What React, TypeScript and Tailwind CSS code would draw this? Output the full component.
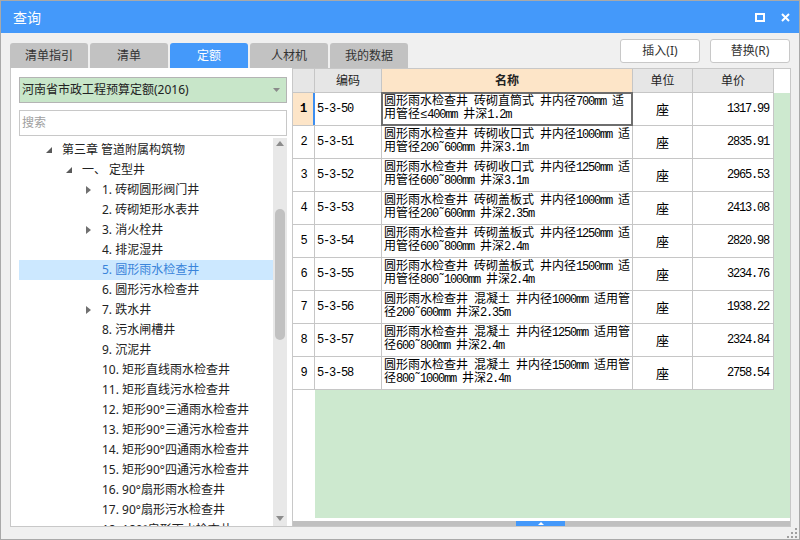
import React from 'react';

type TreeItem = { level: 0 | 1 | 2; text: string; arrow?: 'open' | 'closed'; selected?: boolean };

const treeItems: TreeItem[] = [
  { level: 0, text: '第三章 管道附属构筑物', arrow: 'open' },
  { level: 1, text: '一、 定型井', arrow: 'open' },
  { level: 2, text: '1. 砖砌圆形阀门井', arrow: 'closed' },
  { level: 2, text: '2. 砖砌矩形水表井' },
  { level: 2, text: '3. 消火栓井', arrow: 'closed' },
  { level: 2, text: '4. 排泥湿井' },
  { level: 2, text: '5. 圆形雨水检查井', selected: true },
  { level: 2, text: '6. 圆形污水检查井' },
  { level: 2, text: '7. 跌水井', arrow: 'closed' },
  { level: 2, text: '8. 污水闸槽井' },
  { level: 2, text: '9. 沉泥井' },
  { level: 2, text: '10. 矩形直线雨水检查井' },
  { level: 2, text: '11. 矩形直线污水检查井' },
  { level: 2, text: '12. 矩形90°三通雨水检查井' },
  { level: 2, text: '13. 矩形90°三通污水检查井' },
  { level: 2, text: '14. 矩形90°四通雨水检查井' },
  { level: 2, text: '15. 矩形90°四通污水检查井' },
  { level: 2, text: '16. 90°扇形雨水检查井' },
  { level: 2, text: '17. 90°扇形污水检查井' },
  { level: 2, text: '18. 180°扇形雨水检查井' },
];

const rows = [
  { code: '5-3-50', l1: '圆形雨水检查井 砖砌直筒式 井内径700mm 适', l2: '用管径≤400mm 井深1.2m', price: '1317.99' },
  { code: '5-3-51', l1: '圆形雨水检查井 砖砌收口式 井内径1000mm 适', l2: '用管径200˜600mm 井深3.1m', price: '2835.91' },
  { code: '5-3-52', l1: '圆形雨水检查井 砖砌收口式 井内径1250mm 适', l2: '用管径600˜800mm 井深3.1m', price: '2965.53' },
  { code: '5-3-53', l1: '圆形雨水检查井 砖砌盖板式 井内径1000mm 适', l2: '用管径200˜600mm 井深2.35m', price: '2413.08' },
  { code: '5-3-54', l1: '圆形雨水检查井 砖砌盖板式 井内径1250mm 适', l2: '用管径600˜800mm 井深2.4m', price: '2820.98' },
  { code: '5-3-55', l1: '圆形雨水检查井 砖砌盖板式 井内径1500mm 适', l2: '用管径800˜1000mm 井深2.4m', price: '3234.76' },
  { code: '5-3-56', l1: '圆形雨水检查井 混凝土 井内径1000mm 适用管', l2: '径200˜600mm 井深2.35m', price: '1938.22' },
  { code: '5-3-57', l1: '圆形雨水检查井 混凝土 井内径1250mm 适用管', l2: '径600˜800mm 井深2.4m', price: '2324.84' },
  { code: '5-3-58', l1: '圆形雨水检查井 混凝土 井内径1500mm 适用管', l2: '径800˜1000mm 井深2.4m', price: '2758.54' },
];

const tabs = ['清单指引', '清单', '定额', '人材机', '我的数据'];

// ascii runs get squeezed to half-width like the grid's bitmap font
function Mixed({ text }: { text: string }) {
  return (
    <>
      {text.split(/([\x20-\x7e\u02dc]+)/).map((s, i) =>
        /[\x20-\x7e\u02dc]/.test(s) ? (
          <span key={i} className="tracking-[-1.2px]">
            {s}
          </span>
        ) : (
          <span key={i}>{s}</span>
        )
      )}
    </>
  );
}

const indents = ['w-[27px]', 'w-[47px]', 'w-[67px]'];

export default function App() {
  return (
    <div className="w-[800px] h-[540px] border border-[#a9a9a9] bg-[#f0f0f0] flex flex-col relative overflow-hidden font-['Noto_Sans','Noto_Sans_CJK_SC',sans-serif] text-[#222]">
      {/* Title bar */}
      <div className="h-[32px] bg-[#4499fa] flex items-center pl-[12px] pr-[9px] text-white text-[14px] shrink-0">
        <span>查询</span>
        <div className="ml-auto flex items-center gap-[16px]">
          <svg width="10" height="9" viewBox="0 0 10 9">
            <rect x="1" y="1" width="8" height="7" fill="none" stroke="white" strokeWidth="2" />
          </svg>
          <svg width="9" height="9" viewBox="0 0 9 9">
            <path d="M1 1L8 8M8 1L1 8" stroke="white" strokeWidth="2" />
          </svg>
        </div>
      </div>

      {/* Tabs + buttons */}
      <div className="h-[35px] flex shrink-0 pl-[9px] pr-[9px]">
        <div className="flex items-end gap-[2px]">
          {tabs.map((t) => (
            <div
              key={t}
              className={`w-[78px] h-[25px] rounded-t-[3px] flex items-center justify-center text-[12px] ${
                t === '定额' ? 'bg-[#4499fa] text-white' : 'bg-[#c2c2c2] text-[#333]'
              }`}
            >
              {t}
            </div>
          ))}
        </div>
        <div className="ml-auto mt-[6px] flex gap-[10px] self-start">
          <button className="w-[80px] h-[24px] bg-white border border-[#c8c8c8] rounded-[3px] text-[12px] text-[#333]">
            插入(I)
          </button>
          <button className="w-[80px] h-[24px] bg-white border border-[#c8c8c8] rounded-[3px] text-[12px] text-[#333]">
            替换(R)
          </button>
        </div>
      </div>

      {/* Main */}
      <div className="flex ml-[9px] w-[781px] h-[459px]">
        {/* Left panel */}
        <div className="w-[282px] bg-white border-l border-b border-[#c8c8c8] flex flex-col pl-[8px] pr-[5px]">
          <div className="mt-[9px] h-[26px] bg-[#c8e6c9] border border-[#b4b4b4] flex items-center pl-[2px] pr-[6px] text-[12px]">
            <span>河南省市政工程预算定额(2016)</span>
            <svg className="ml-auto" width="7" height="4" viewBox="0 0 7 4">
              <polygon points="0,0 7,0 3.5,4" fill="#8a8a8a" />
            </svg>
          </div>
          <div className="mt-[7px] h-[26px] bg-white border border-[#c8c8c8] flex items-center pl-[2px] text-[12px] text-[#a0a0a0]">
            搜索
          </div>
          <div className="mt-[2px] flex-1 min-h-0 flex">
            <div className="flex-1 overflow-hidden pt-[2px]">
              {treeItems.map((it) => (
                <div
                  key={it.text}
                  className={`h-[20px] flex items-center text-[12px] whitespace-nowrap ${
                    it.selected ? 'bg-[#cce8ff] text-[#3a84da]' : ''
                  }`}
                >
                  <div className={`${indents[it.level]} shrink-0`} />
                  <div className="w-[16px] shrink-0 flex items-center">
                    {it.arrow === 'open' && (
                      <svg width="6" height="6" viewBox="0 0 6 6">
                        <polygon points="6,0 6,6 0,6" fill="#5a5a5a" />
                      </svg>
                    )}
                    {it.arrow === 'closed' && (
                      <svg width="5" height="8" viewBox="0 0 5 8">
                        <polygon points="0,0 5,4 0,8" fill="#707070" />
                      </svg>
                    )}
                  </div>
                  <span>{it.text}</span>
                </div>
              ))}
            </div>
            {/* tree scrollbar */}
            <div className="w-[14px] bg-[#e8e8e8] flex flex-col items-center">
              <svg className="mt-[3px]" width="8" height="5" viewBox="0 0 8 5">
                <polygon points="4,0 8,5 0,5" fill="#8c8c8c" />
              </svg>
              <div className="mt-[63px] w-[10px] h-[131px] rounded-full bg-[#c1c1c1]" />
              <svg className="mt-auto mb-[5px]" width="8" height="5" viewBox="0 0 8 5">
                <polygon points="0,0 8,0 4,5" fill="#8c8c8c" />
              </svg>
            </div>
          </div>
        </div>

        {/* Right panel: grid */}
        <div className="w-[499px] border border-[#c8c8c8] bg-white flex flex-col font-['Liberation_Mono','Noto_Sans_CJK_SC',monospace] text-[12px] text-black">
          <div className="flex flex-1 min-h-0">
            <div className="w-[481px] flex flex-col">
              {/* header */}
              <div className="h-[24px] flex border-b border-[#c6c6c6] font-['Noto_Sans','Noto_Sans_CJK_SC',sans-serif] text-[12px] text-[#222]">
                <div className="w-[22px] bg-[#e6e6e6] border-r border-[#c6c6c6]" />
                <div className="w-[67px] bg-[#e6e6e6] border-r border-[#c6c6c6] flex items-center justify-center">编码</div>
                <div className="w-[251px] bg-[#fde5c8] border-r border-[#c6c6c6] flex items-center justify-center font-bold">名称</div>
                <div className="w-[60px] bg-[#e6e6e6] border-r border-[#c6c6c6] flex items-center justify-center">单位</div>
                <div className="w-[81px] bg-[#e6e6e6] border-r border-[#c6c6c6] flex items-center justify-center">单价</div>
              </div>
              {rows.map((r, i) => (
                <div key={r.code} className="h-[33px] flex border-b border-[#c6c6c6]">
                  <div
                    className={`w-[22px] flex items-center justify-center ${
                      i === 0 ? 'bg-[#fde5c8] font-bold border-r-2 border-[#3d8ef0]' : 'border-r border-[#c6c6c6]'
                    }`}
                  >
                    <span className="tracking-[-1.2px]">{i + 1}</span>
                  </div>
                  <div className="w-[67px] border-r border-[#c6c6c6] flex items-center pl-[2px]">
                    <span className="tracking-[-1.2px]">{r.code}</span>
                  </div>
                  <div className="w-[251px] border-r border-[#c6c6c6] flex flex-col justify-center pl-[2px] leading-[13px] whitespace-nowrap overflow-visible relative">
                    <div>
                      <Mixed text={r.l1} />
                    </div>
                    <div>
                      <Mixed text={r.l2} />
                    </div>
                    {i === 0 && <div className="absolute inset-[-1px] border-2 border-[#6e6e6e]" />}
                  </div>
                  <div className="w-[60px] border-r border-[#c6c6c6] flex items-center justify-center text-[13px] font-['Noto_Sans_CJK_SC',sans-serif]">
                    座
                  </div>
                  <div className="w-[81px] border-r border-[#c6c6c6] flex items-center justify-end pr-[4px]">
                    <span className="tracking-[-1.2px]">{r.price}</span>
                  </div>
                </div>
              ))}
              <div className="flex-1 flex">
                <div className="w-[22px] bg-white" />
                <div className="flex-1 bg-[#cde9cf]" />
              </div>
            </div>
            <div className="w-[16px] flex flex-col">
              <div className="h-[24px] bg-white" />
              <div className="flex-1 bg-[#cde9cf]" />
            </div>
          </div>
          <div className="h-[3px] bg-white" />
          <div className="h-[5px] bg-[#c0c0c0] flex">
            <div className="ml-[223px] w-[49px] bg-[#4499fa] flex items-center justify-center">
              <svg width="6" height="3" viewBox="0 0 6 3">
                <polygon points="3,0 6,3 0,3" fill="white" />
              </svg>
            </div>
          </div>
        </div>
      </div>

      {/* resize grip */}
      <svg className="absolute right-[2px] bottom-[1px]" width="10" height="10" viewBox="0 0 10 10">
        <rect x="8" y="0" width="2" height="2" fill="#a0a0a0" />
        <rect x="4" y="4" width="2" height="2" fill="#a0a0a0" />
        <rect x="8" y="4" width="2" height="2" fill="#a0a0a0" />
        <rect x="0" y="8" width="2" height="2" fill="#a0a0a0" />
        <rect x="4" y="8" width="2" height="2" fill="#a0a0a0" />
        <rect x="8" y="8" width="2" height="2" fill="#a0a0a0" />
      </svg>
    </div>
  );
}
